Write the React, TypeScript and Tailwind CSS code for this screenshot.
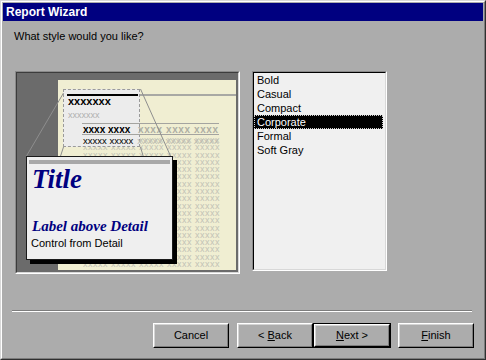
import React from "react";

const styles = ["Bold", "Casual", "Compact", "Corporate", "Formal", "Soft Gray"];
const rowText = "xxxxx xxxxx xxxxx xxxxx xxxxx";

// the sample page drawn in the preview
const Preview = () => {
  return (
    <div className="w-[225px] h-[203px] border border-t-[#8a8a8a] border-l-[#8a8a8a] border-r-white border-b-white">
      <div className="relative h-full overflow-hidden bg-[#6b6b6b] border border-t-[#3c3c3c] border-l-[#3c3c3c] border-r-[#d8d8d8] border-b-[#d8d8d8]">
        <div className="absolute left-[41px] top-[7px] w-[178px] h-[190px] bg-[#f0eed2] pt-[14px] pl-[82px]">
          <div className="w-[96px] h-[2px] bg-[#a8a8a4]" />
        </div>

        {/* detail rows */}
        <div className="absolute left-[66px] top-[64px] w-[137px] flex flex-col text-[9px] tracking-[0.5px] text-[#c2c2b6]">
          {Array.from({ length: 18 }).map((_, i) => (
            <div key={i} className="h-[7.3px] leading-[7px] whitespace-nowrap overflow-hidden">
              {rowText}
            </div>
          ))}
        </div>

        {/* zoomed part of the header */}
        <div className="absolute left-[46px] top-[16px] w-[77px] h-[58px] bg-[#ececec] border border-dashed border-[#9a9a9a] flex flex-col pt-[4px] pl-[3px]">
          <div className="w-[71px] h-[2px] bg-black" />
          <div className="pl-[1px] text-[11px] leading-[10px] font-bold">xxxxxxx</div>
          <div className="mt-[5px] pl-[1px] text-[9px] leading-[9px] text-[#b0b0b0]">xxxxxxx</div>
        </div>

        <div className="absolute left-[65px] top-[50px] w-[137px] flex flex-col">
          <div className="h-[11px] border-t border-[#a4a4a0] flex whitespace-nowrap overflow-hidden pl-px text-[10px] leading-[11px] font-bold">
            <span className="w-[55px]">xxxx xxxx</span>
            <span className="tracking-[0.6px] text-[#aeaea4]">xxxx xxxx xxxx</span>
          </div>
          <div className="h-[11px] border-t border-[#a4a4a0] flex whitespace-nowrap overflow-hidden pl-px text-[9.5px] leading-[11px]">
            <span className="w-[55px]">xxxxx xxxxx</span>
            <span className="tracking-[0.3px] text-[#bbbbb0]">xxxxx xxxxx xxxxx</span>
          </div>
        </div>

        <svg className="absolute inset-0 w-full h-full" viewBox="0 0 221 199">
          <g stroke="#8e8e8e" strokeWidth="1" fill="none">
            <line x1="46.5" y1="20" x2="9.5" y2="83" />
            <line x1="123.5" y1="16" x2="153.5" y2="83" />
            <line x1="46.5" y1="74" x2="9.5" y2="187" />
            <line x1="123.5" y1="74" x2="156.5" y2="187" />
          </g>
        </svg>

        {/* callout card */}
        <div className="absolute left-[9px] top-[83px] w-[147px] h-[104px] bg-[#efefef] border border-[#1a1a1a] shadow-[4px_4px_0_#000] flex flex-col pt-[3px] px-[2px] whitespace-nowrap">
          <div className="h-[4px] bg-[#a8a8a8]" />
          <div className="mt-[2px] pl-[3px] font-['Liberation_Serif',serif] italic font-bold text-[27px] leading-[26px] text-[#000080]">
            Title
          </div>
          <div className="mt-[27px] pl-[3px] font-['Liberation_Serif',serif] italic font-bold text-[15px] leading-[15px] text-[#000080]">
            Label above Detail
          </div>
          <div className="mt-[4px] pl-[2px] text-[11px] leading-[11px] text-black">Control from Detail</div>
        </div>
      </div>
    </div>
  );
};

const StyleList = () => {
  return (
    <div className="w-[135px] h-[200px] border border-t-[#8a8a8a] border-l-[#8a8a8a] border-r-white border-b-white">
      <div className="h-full bg-[#f0f0f0] border border-t-black border-l-black border-r-[#d8d8d8] border-b-[#d8d8d8] pr-[2px]">
        {styles.map((s) =>
          s === "Corporate" ? (
            <div
              key={s}
              className="h-[14px] bg-black text-white text-[11px] leading-[12px] pl-[2px] border border-dotted border-[#cfcfcf]"
            >
              {s}
            </div>
          ) : (
            <div key={s} className="h-[14px] text-[11px] leading-[14px] pl-[3px]">
              {s}
            </div>
          )
        )}
      </div>
    </div>
  );
};

type BtnProps = { pre?: string; hot?: string; post: string; isDefault?: boolean; className?: string };

const WizButton = ({ pre, hot, post, isDefault, className }: BtnProps) => {
  const face = (
    <span className="flex h-full w-full border border-t-white border-l-white border-r-black border-b-black">
      <span className="flex h-full w-full items-center justify-center border border-t-[#d4d4d4] border-l-[#d4d4d4] border-r-[#7c7c7c] border-b-[#7c7c7c] text-[11px] leading-[13px] text-black">
        <span className="whitespace-pre">
          {pre}
          {hot && <span className="underline underline-offset-1">{hot}</span>}
          {post}
        </span>
      </span>
    </span>
  );
  if (isDefault) {
    return <button className={`w-[78px] h-[25px] border border-black p-0 bg-[#acacac] ${className ?? ""}`}>{face}</button>;
  }
  return <button className={`w-[76px] h-[25px] p-0 bg-[#acacac] ${className ?? ""}`}>{face}</button>;
};

export default function App() {
  return (
    <div className="w-[486px] h-[360px] bg-[#acacac] font-['Liberation_Sans',Arial,sans-serif] text-black border border-t-[#d8d8d8] border-l-[#d8d8d8] border-r-[#303030] border-b-[#303030]">
      <div className="h-full flex flex-col p-px border border-t-white border-l-white border-r-[#7c7c7c] border-b-[#7c7c7c]">
        <div className="h-[18px] bg-[#000080] text-white font-bold text-[12px] leading-[18px] pl-[3px]">Report Wizard</div>
        <p className="mt-[9px] ml-[11px] text-[11px] leading-[13px]">What style would you like?</p>
        <div className="mt-[28px] ml-[12px] flex items-start gap-[12px]">
          <Preview />
          <StyleList />
        </div>
        <div className="mt-[36px] ml-[9px] w-[460px] border-t border-b border-t-[#7c7c7c] border-b-white" />
        <div className="mt-[11px] ml-[150px] flex">
          <WizButton post="Cancel" />
          <WizButton pre="< " hot="B" post="ack" className="ml-[8px]" />
          <WizButton hot="N" post="ext >" isDefault />
          <WizButton hot="F" post="inish" className="ml-[7px]" />
        </div>
      </div>
    </div>
  );
}
